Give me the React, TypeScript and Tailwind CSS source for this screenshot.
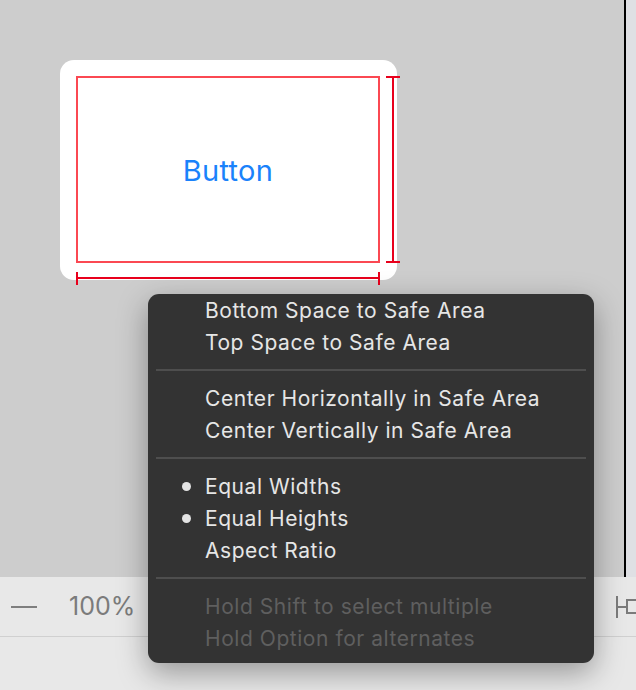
import React from "react";

const groups = [
  [
    { label: "Bottom Space to Safe Area" },
    { label: "Top Space to Safe Area" },
  ],
  [
    { label: "Center Horizontally in Safe Area" },
    { label: "Center Vertically in Safe Area" },
  ],
  [
    { label: "Equal Widths", checked: true },
    { label: "Equal Heights", checked: true },
    { label: "Aspect Ratio" },
  ],
  [
    { label: "Hold Shift to select multiple", disabled: true },
    { label: "Hold Option for alternates", disabled: true },
  ],
];

function MenuItem({ label, checked, disabled }: any) {
  return (
    <div className="relative h-[32px] flex items-center pl-[57px] pt-[2px]">
      {checked && (
        <span className="absolute left-[34px] top-[12px] w-[9px] h-[9px] rounded-full bg-[#e3e3e3]" />
      )}
      <span
        className={
          disabled
            ? "text-[21px] text-[#5f5f5f] tracking-[0.55px]"
            : "text-[21px] text-[#e6e6e6] tracking-[0.55px]"
        }
      >
        {label}
      </span>
    </div>
  );
}

function ConstraintMenu() {
  return (
    <div className="absolute left-[148px] top-[294px] w-[446px] rounded-[11px] bg-[#333333] pb-[9px] shadow-[0_10px_30px_rgba(0,0,0,0.35)]">
      {groups.map((group, i) => (
        <div key={i}>
          {i > 0 && (
            <div className="h-[24px] flex items-center px-[8px]">
              <div className="h-[2px] w-full bg-[#4e4e4e]" />
            </div>
          )}
          {group.map((item, j) => (
            <MenuItem key={j} {...item} />
          ))}
        </div>
      ))}
    </div>
  );
}

function ButtonCard() {
  return (
    <div className="relative w-[337px] h-[220px] rounded-[14px] bg-white">
      <div className="absolute left-[16px] top-[16px] w-[304px] h-[187px] border-2 border-[#fb4852] flex items-center justify-center">
        <span className="text-[29px] text-[#1a82fb] tracking-[0.3px] mt-[3px]">Button</span>
      </div>
      {/* height indicator */}
      <div className="absolute left-[326px] top-[16px] w-[14px] h-[2px] bg-[#e8001c]" />
      <div className="absolute left-[332px] top-[16px] w-[2px] h-[187px] bg-[#e8001c]" />
      <div className="absolute left-[326px] top-[201px] w-[14px] h-[2px] bg-[#e8001c]" />
      {/* width indicator */}
      <div className="absolute left-[16px] top-[212px] w-[2px] h-[13px] bg-[#e8001c]" />
      <div className="absolute left-[16px] top-[217px] w-[304px] h-[2px] bg-[#e8001c]" />
      <div className="absolute left-[318px] top-[212px] w-[2px] h-[13px] bg-[#e8001c]" />
    </div>
  );
}

export default function App() {
  return (
    <div className="relative w-[636px] h-[690px] overflow-hidden bg-[#e8e8e8] font-['Inter',sans-serif]">
      <div className="flex h-[577px]">
        <div className="flex-1 bg-[#cdcdcd] pl-[60px] pt-[60px]">
          <ButtonCard />
        </div>
        <div className="w-[2px] bg-black" />
        <div className="w-[10px] bg-[#dfe0e4]" />
      </div>
      <div className="relative h-[60px] flex items-center border-b border-[#d0d0d0]">
        <div className="ml-[11px] w-[26px] h-[2px] bg-[#7e7e7e]" />
        <span className="ml-[32px] text-[25px] text-[#7b7b7b]">100%</span>
        <div className="flex items-center h-[22px] pl-[616px] absolute left-0">
          <div className="w-[2px] h-[22px] bg-[#7b7b7b]" />
          <div className="w-[8px] h-[2px] bg-[#7b7b7b]" />
          <div className="w-[14px] h-[15px] border-2 border-[#7b7b7b]" />
        </div>
      </div>
      <ConstraintMenu />
    </div>
  );
}
